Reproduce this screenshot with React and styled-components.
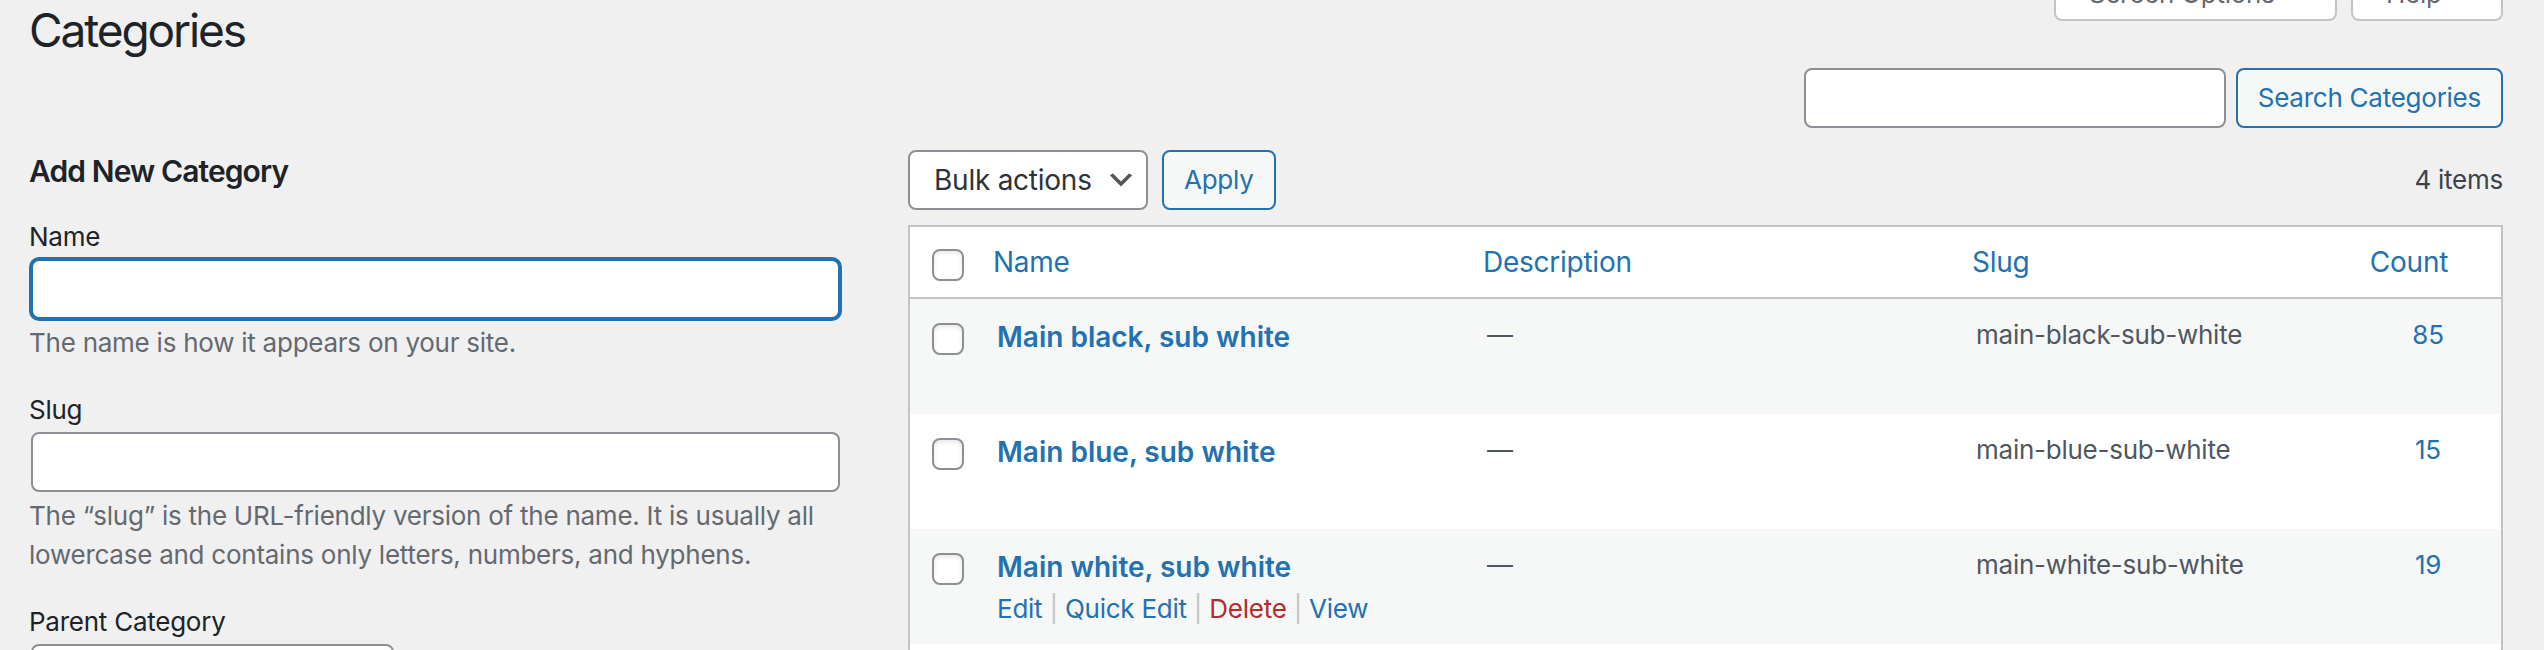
import React from 'react';
import styled, { createGlobalStyle } from 'styled-components';

const GlobalStyle = createGlobalStyle`
  html, body {
    margin: 0;
    padding: 0;
    background: #f0f0f1;
  }
  body {
    font-family: Inter, "Liberation Sans", "Noto Sans", sans-serif;
    font-size: 26px;
    letter-spacing: -0.25px;
    color: #3c434a;
    -webkit-font-smoothing: antialiased;
  }
  * {
    box-sizing: border-box;
  }
`;

const Page = styled.div`
  height: 650px;
  overflow: hidden;
  padding: 0 41px 0 29px;
`;

const TopRow = styled.div`
  display: flex;
  justify-content: space-between;
  align-items: flex-start;
`;

const Title = styled.h1`
  margin: 0;
  font-size: 46px;
  line-height: 60px;
  font-weight: 400;
  color: #1d2327;
  letter-spacing: -2.1px;
`;

const ScreenTabs = styled.div`
  display: flex;
  gap: 14px;
  margin-top: -35px;
`;

const ScreenTab = styled.div`
  width: ${p => p.$width}px;
  height: 56px;
  background: #fff;
  border: 2px solid #c3c4c7;
  border-top: none;
  border-radius: 0 0 8px 8px;
  padding-left: 33px;
  font-size: 26px;
  line-height: 58px;
  color: #646970;
`;

const SearchRow = styled.div`
  display: flex;
  justify-content: flex-end;
  gap: 10px;
  margin-top: 8px;
`;

const SearchInput = styled.input`
  width: 422px;
  height: 60px;
  margin: 0;
  border: 2px solid #8c8f94;
  border-radius: 8px;
  background: #fff;
  font-family: inherit;
  font-size: 28px;
  padding: 0 16px;
  outline: none;
`;

const Button = styled.button`
  height: 60px;
  margin: 0;
  padding: 0 20px;
  border: 2px solid #2271b1;
  border-radius: 8px;
  background: #f6f7f7;
  color: #2271b1;
  font-family: inherit;
  font-size: 26px;
  letter-spacing: -0.25px;
  line-height: 56px;
  cursor: pointer;
`;

const Columns = styled.div`
  display: flex;
  align-items: flex-start;
`;

const LeftCol = styled.div`
  width: 852px;
  flex: none;
`;

const RightCol = styled.div`
  flex: 1;
  margin-left: 27px;
`;

const FormHeading = styled.h2`
  margin: 23px 0 0;
  font-size: 30px;
  line-height: 40px;
  font-weight: 600;
  letter-spacing: -0.9px;
  color: #1d2327;
`;

const Field = styled.div`
  margin-top: ${p => (p.$first ? 26 : 28)}px;
`;

const Label = styled.label`
  display: block;
  font-size: 26px;
  line-height: 40px;
  color: #1d2327;
`;

const TextInput = styled.input`
  display: block;
  width: 95%;
  height: 60px;
  margin: 2px 2px 0;
  padding: 0 16px;
  background: #fff;
  border: 2px solid ${p => (p.$focused ? '#2271b1' : '#8c8f94')};
  box-shadow: ${p => (p.$focused ? '0 0 0 2px #2271b1' : 'none')};
  border-radius: 8px;
  font-family: inherit;
  font-size: 28px;
  outline: none;
`;

const Hint = styled.p`
  margin: 4px 0 0;
  font-size: 26px;
  line-height: 39px;
  color: #646970;
`;

const ParentSelect = styled.div`
  width: 363px;
  height: 60px;
  margin: 2px 2px 0;
  border: 2px solid #8c8f94;
  border-radius: 8px;
  background: #fff;
  padding: 0 16px;
  font-size: 28px;
  line-height: 56px;
  color: #2c3338;
`;

const Tablenav = styled.div`
  display: flex;
  align-items: center;
  height: 60px;
  margin-top: 22px;
`;

const BulkSelect = styled.div`
  width: 240px;
  height: 60px;
  display: flex;
  align-items: center;
  justify-content: space-between;
  padding: 0 9px 0 24px;
  border: 2px solid #8c8f94;
  border-radius: 8px;
  background: #fff;
  font-size: 28px;
  color: #2c3338;
`;

const ApplyButton = styled(Button)`
  margin-left: 14px;
`;

const ItemCount = styled.span`
  margin-left: auto;
  font-size: 26px;
  line-height: 40px;
  color: #3c434a;
`;

const ListTable = styled.div`
  margin-top: 15px;
  border: 2px solid #c3c4c7;
  border-bottom: none;
  background: #fff;
`;

const grid = `
  display: grid;
  grid-template-columns: 67px 490px 489px 399px 1fr;
`;

const HeadRow = styled.div`
  ${grid}
  height: 72px;
  border-bottom: 2px solid #c3c4c7;
  align-items: center;
`;

const BodyRow = styled.div`
  ${grid}
  background: ${p => (p.$alt ? '#f6f7f7' : '#fff')};
`;

const CheckCell = styled.div`
  align-self: start;
  padding: ${p => (p.$head ? 22 : 24)}px 0 0 22px;
`;

const Checkbox = styled.span`
  display: block;
  width: 32px;
  height: 32px;
  border: 2px solid #8c8f94;
  border-radius: 8px;
  background: #fff;
  box-shadow: inset 0 2px 4px rgba(0, 0, 0, 0.1);
`;

const HeadCell = styled.div`
  display: flex;
  justify-content: ${p => (p.$center ? 'center' : 'flex-start')};
  padding-left: ${p => (p.$center ? 0 : 16)}px;
  font-size: 28px;
  line-height: 40px;
  color: #2271b1;
`;

const SortSpacer = styled.span`
  display: inline-block;
  width: 38px;
`;

const Cell = styled.div`
  padding: 16px 20px;
  font-size: 26px;
  line-height: 40px;
  color: #50575e;
  text-align: ${p => (p.$center ? 'center' : 'left')};
`;

const RowTitle = styled.a`
  display: block;
  font-size: 28px;
  line-height: 44px;
  font-weight: 600;
  letter-spacing: 0;
  color: #2271b1;
  text-decoration: none;
`;

const RowActions = styled.div`
  font-size: 26px;
  line-height: 39px;
  color: #c3c4c7;
  visibility: ${p => (p.$show ? 'visible' : 'hidden')};
`;

const ActionLink = styled.a`
  color: ${p => (p.$danger ? '#b32d2e' : '#2271b1')};
  text-decoration: none;
`;

const CountLink = styled.a`
  color: #2271b1;
  text-decoration: none;
`;

const Chevron = () => (
  <svg width="32" height="32" viewBox="0 0 20 20" aria-hidden="true">
    <path d="M5 6l5 5 5-5 2 1-7 7-7-7 2-1z" fill="#555" />
  </svg>
);

const categories = [
  { name: 'Main black, sub white', slug: 'main-black-sub-white', count: 85 },
  { name: 'Main blue, sub white', slug: 'main-blue-sub-white', count: 15 },
  { name: 'Main white, sub white', slug: 'main-white-sub-white', count: 19, hover: true },
  { name: 'Uncategorized', slug: 'uncategorized', count: 0 },
];

const App = () => {
  return (
    <>
      <GlobalStyle />
      <Page>
        <TopRow>
          <Title>Categories</Title>
          <ScreenTabs>
            <ScreenTab $width={283}>Screen Options</ScreenTab>
            <ScreenTab $width={152}>Help</ScreenTab>
          </ScreenTabs>
        </TopRow>

        <SearchRow>
          <SearchInput type="search" />
          <Button>Search Categories</Button>
        </SearchRow>

        <Columns>
          <LeftCol>
            <FormHeading>Add New Category</FormHeading>
            <Field $first>
              <Label>Name</Label>
              <TextInput $focused />
              <Hint>The name is how it appears on your site.</Hint>
            </Field>
            <Field>
              <Label>Slug</Label>
              <TextInput />
              <Hint>
                The “slug” is the URL-friendly version of the name. It is usually all lowercase and
                contains only letters, numbers, and hyphens.
              </Hint>
            </Field>
            <Field>
              <Label>Parent Category</Label>
              <ParentSelect>None</ParentSelect>
            </Field>
          </LeftCol>

          <RightCol>
            <Tablenav>
              <BulkSelect>
                Bulk actions
                <Chevron />
              </BulkSelect>
              <ApplyButton>Apply</ApplyButton>
              <ItemCount>4 items</ItemCount>
            </Tablenav>

            <ListTable>
              <HeadRow>
                <CheckCell $head>
                  <Checkbox />
                </CheckCell>
                <HeadCell>Name</HeadCell>
                <HeadCell>Description</HeadCell>
                <HeadCell>Slug</HeadCell>
                <HeadCell $center>
                  Count
                  <SortSpacer />
                </HeadCell>
              </HeadRow>

              {categories.map((cat, i) => (
                <BodyRow key={cat.slug} $alt={i % 2 === 0}>
                  <CheckCell>
                    <Checkbox />
                  </CheckCell>
                  <Cell>
                    <RowTitle>{cat.name}</RowTitle>
                    <RowActions $show={cat.hover}>
                      <ActionLink>Edit</ActionLink> | <ActionLink>Quick Edit</ActionLink> |{' '}
                      <ActionLink $danger>Delete</ActionLink> | <ActionLink>View</ActionLink>
                    </RowActions>
                  </Cell>
                  <Cell>—</Cell>
                  <Cell>{cat.slug}</Cell>
                  <Cell $center>
                    <CountLink>{cat.count}</CountLink>
                  </Cell>
                </BodyRow>
              ))}
            </ListTable>
          </RightCol>
        </Columns>
      </Page>
    </>
  );
};

export default App;
